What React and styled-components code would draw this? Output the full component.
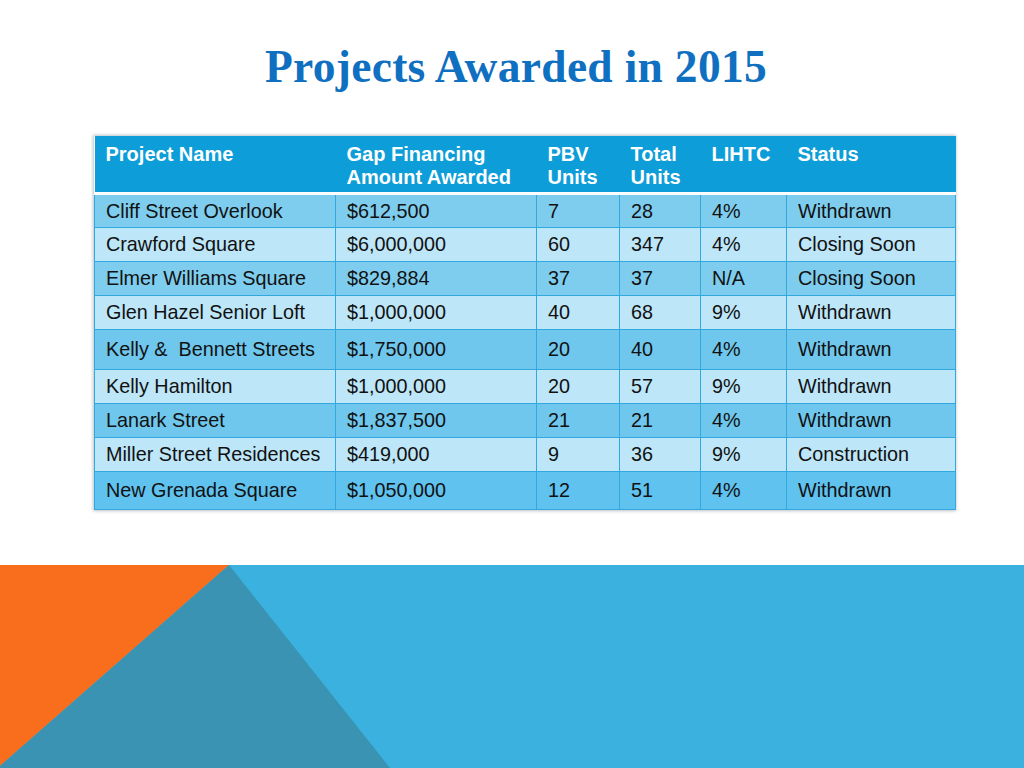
import React from "react";
import styled, { createGlobalStyle } from "styled-components";

const Global = createGlobalStyle`
  html, body { margin: 0; padding: 0; background: #ffffff; }
  #root { width: 1024px; height: 768px; }
`;

const Page = styled.div`
  width: 1024px;
  height: 768px;
  display: flex;
  flex-direction: column;
  background: #ffffff;
  overflow: hidden;
`;

const Title = styled.h1`
  margin: 0;
  padding: 39px 0 0 8px;
  height: 98px;
  box-sizing: border-box;
  text-align: center;
  font-family: "Liberation Serif", "Times New Roman", serif;
  font-weight: bold;
  font-size: 45.5px;
  line-height: 56px;
  color: #0f6fc0;
  letter-spacing: 0.3px;
`;

const TableWrap = styled.div`
  margin-top: 38px;
  margin-left: 94px;
  width: 861px;
  box-shadow: 0 0 3px 1px rgba(60, 80, 100, 0.35);
`;

const Table = styled.table`
  width: 861px;
  border-collapse: collapse;
  table-layout: fixed;
  font-family: "Liberation Sans", Arial, sans-serif;
  font-size: 19.8px;
`;

const HeadRow = styled.tr`
  background: #0d9dd8;
  height: 57px;
  border-bottom: 3px solid #ffffff;
`;

const Th = styled.th`
  text-align: left;
  vertical-align: top;
  color: #ffffff;
  font-weight: bold;
  font-size: 20px;
  line-height: 23px;
  padding: 7px 0 0 11px;
`;

const Row = styled.tr`
  background: ${(p) => p.$bg};
  height: ${(p) => p.$h}px;
`;

const Td = styled.td`
  color: #111111;
  padding: 0 0 0 11px;
  line-height: 22px;
  border: 1px solid #32a9de;
  white-space: nowrap;
`;

const Band = styled.div`
  margin-top: auto;
  height: 203px;
  background: #3bb1df;
`;

const Shapes = styled.svg`
  display: block;
  width: 1024px;
  height: 203px;
`;

const cols = [241, 201, 83, 81, 86, 169];
const headers = [
  "Project Name",
  ["Gap Financing", "Amount Awarded"],
  ["PBV", "Units"],
  ["Total", "Units"],
  "LIHTC",
  "Status",
];

const rows = [
  ["Cliff Street Overlook", "$612,500", "7", "28", "4%", "Withdrawn"],
  ["Crawford Square", "$6,000,000", "60", "347", "4%", "Closing Soon"],
  ["Elmer Williams Square", "$829,884", "37", "37", "N/A", "Closing Soon"],
  ["Glen Hazel Senior Loft", "$1,000,000", "40", "68", "9%", "Withdrawn"],
  ["Kelly &\u00a0 Bennett Streets", "$1,750,000", "20", "40", "4%", "Withdrawn"],
  ["Kelly Hamilton", "$1,000,000", "20", "57", "9%", "Withdrawn"],
  ["Lanark Street", "$1,837,500", "21", "21", "4%", "Withdrawn"],
  ["Miller Street Residences", "$419,000", "9", "36", "9%", "Construction"],
  ["New Grenada Square", "$1,050,000", "12", "51", "4%", "Withdrawn"],
];

const bgs = ["#7ecdee", "#bde6f8", "#7ecdee", "#bde6f8", "#6fc7ed", "#bde6f8", "#6fc7ed", "#bde6f8", "#5fc2ef"];
const heights = [34, 34, 34, 34, 40, 34, 34, 34, 38];

export default function App() {
  return (
    <Page>
      <Global />
      <Title>Projects Awarded in 2015</Title>
      <TableWrap>
        <Table>
          <colgroup>
            {cols.map((w, i) => (
              <col key={i} style={{ width: w }} />
            ))}
          </colgroup>
          <thead>
            <HeadRow>
              {headers.map((h, i) => (
                <Th key={i}>
                  {Array.isArray(h) ? (
                    <>
                      {h[0]}
                      <br />
                      {h[1]}
                    </>
                  ) : (
                    h
                  )}
                </Th>
              ))}
            </HeadRow>
          </thead>
          <tbody>
            {rows.map((r, i) => (
              <Row key={i} $bg={bgs[i]} $h={heights[i]}>
                {r.map((c, j) => (
                  <Td key={j}>{c}</Td>
                ))}
              </Row>
            ))}
          </tbody>
        </Table>
      </TableWrap>
      <Band>
        <Shapes viewBox="0 0 1024 203">
          <polygon points="0,0 229,0 0,201" fill="#f96e1d" />
          <polygon points="229,0 0,201 0,203 390,203" fill="#3a93b3" />
        </Shapes>
      </Band>
    </Page>
  );
}
